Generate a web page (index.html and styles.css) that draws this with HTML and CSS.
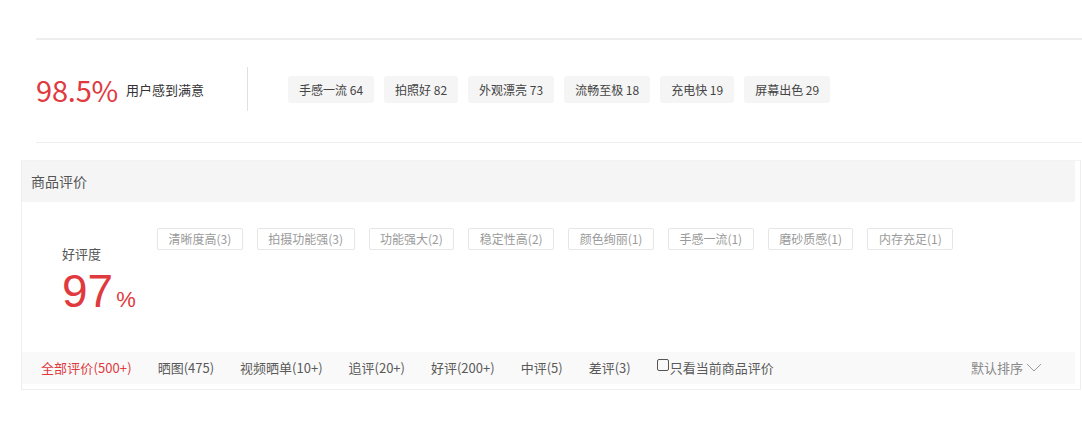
FILE: index.html
```html
<!DOCTYPE html>
<html lang="zh-CN">
<head>
<meta charset="utf-8">
<title>商品评价</title>
<link rel="stylesheet" href="styles.css">
</head>
<body>
<section class="summary">
  <div class="summary-row">
    <div class="rate">
      <span class="rate-num">98.5%</span>
      <span class="rate-text">用户感到满意</span>
    </div>
    <div class="divider"></div>
    <ul class="hot-tags">
      <li>手感一流 64</li>
      <li>拍照好 82</li>
      <li>外观漂亮 73</li>
      <li>流畅至极 18</li>
      <li>充电快 19</li>
      <li>屏幕出色 29</li>
    </ul>
  </div>
</section>

<section class="review-box">
  <div class="review-head">商品评价</div>
  <div class="review-body">
    <div class="good-rate">
      <div class="good-label">好评度</div>
      <div class="good-num">97<span class="good-pct">%</span></div>
    </div>
    <ul class="imp-tags">
      <li>清晰度高(3)</li>
      <li>拍摄功能强(3)</li>
      <li>功能强大(2)</li>
      <li>稳定性高(2)</li>
      <li>颜色绚丽(1)</li>
      <li>手感一流(1)</li>
      <li>磨砂质感(1)</li>
      <li>内存充足(1)</li>
    </ul>
  </div>
  <div class="filter-bar">
    <ul class="filters">
      <li class="active">全部评价(500+)</li>
      <li>晒图(475)</li>
      <li>视频晒单(10+)</li>
      <li>追评(20+)</li>
      <li>好评(200+)</li>
      <li>中评(5)</li>
      <li>差评(3)</li>
      <li class="only-current"><span class="check"></span>只看当前商品评价</li>
    </ul>
    <div class="sort">默认排序<svg class="chevron" width="16" height="9" viewBox="0 0 16 9"><polyline points="1,1 8,8 15,1" fill="none" stroke="#9a9a9a" stroke-width="1"/></svg></div>
  </div>
</section>
</body>
</html>
```

FILE: styles.css
```css
* { box-sizing: border-box; }
html, body { margin: 0; padding: 0; background: #fff; }
body {
  font-family: "Noto Sans CJK SC", "Noto Sans", sans-serif;
  color: #333;
  font-size: 12px;
}
ul { list-style: none; margin: 0; padding: 0; }

.summary {
  margin: 38px 0 0 36px;
  border-top: 2px solid #eeeeee;
  border-bottom: 1px solid #eeeeee;
}
.summary-row {
  display: flex;
  align-items: center;
  height: 98px;
  margin-bottom: 4px;
}
.rate { display: flex; align-items: center; }
.rate-num {
  color: #e0393e;
  font-size: 29px;
  line-height: 1;
  letter-spacing: -0.2px;
}
.rate-text {
  font-size: 13px;
  line-height: 18px;
  color: #333;
  margin-left: 8px;
  padding-top: 2px;
}
.divider {
  width: 1px;
  height: 44px;
  background: #e0e0e0;
  margin: 0 40px 0 43px;
}
.hot-tags { display: flex; gap: 10px; }
.hot-tags li {
  background: #f5f5f5;
  border-radius: 3px;
  height: 27px;
  line-height: 27px;
  padding: 0 11px;
  font-size: 12px;
  color: #444;
}

.review-box {
  margin: 17px 0 0 21px;
  width: 1060px;
  border: 1px solid #eeeeee;
  border-top-color: #f3f3f3;
  padding: 0 5px 5px 0;
}
.review-head {
  height: 41px;
  line-height: 41px;
  background: #f5f5f5;
  padding-left: 9px;
  font-size: 14px;
  color: #555;
}
.review-body {
  display: flex;
  height: 150px;
}
.good-rate {
  width: 135px;
  padding: 44px 0 0 40px;
}
.good-label {
  font-size: 13px;
  line-height: 16px;
  color: #555;
}
.good-num {
  font-family: "Liberation Sans", Arial, sans-serif;
  color: #e0393e;
  font-size: 46px;
  line-height: 46px;
  margin-top: 6px;
}
.good-pct {
  font-size: 22px;
  margin-left: 3px;
}
.imp-tags {
  display: flex;
  flex-wrap: wrap;
  align-content: flex-start;
  gap: 14px;
  padding-top: 26px;
}
.imp-tags li {
  border: 1px solid #e6e6e6;
  border-radius: 2px;
  height: 22px;
  line-height: 20px;
  padding: 0 10.5px;
  font-size: 12px;
  color: #9a9a9a;
}

.filter-bar {
  display: flex;
  align-items: center;
  justify-content: space-between;
  height: 32px;
  background: #f9f9f9;
  padding: 0 33px 1px 19px;
}
.filters { display: flex; gap: 26px; }
.filters li {
  font-size: 13px;
  line-height: 30px;
  color: #5a5a5a;
}
.filters li.active { color: #e0393e; letter-spacing: 0.1px; }
.only-current { display: flex; align-items: center; }
.check {
  display: inline-block;
  width: 12px;
  height: 12px;
  border: 1px solid #555;
  border-radius: 2px;
  margin-right: 1px;
  position: relative;
  top: -3px;
}
.sort {
  display: flex;
  align-items: center;
  font-size: 13px;
  color: #888;
}
.chevron { margin-left: 3px; }
```
